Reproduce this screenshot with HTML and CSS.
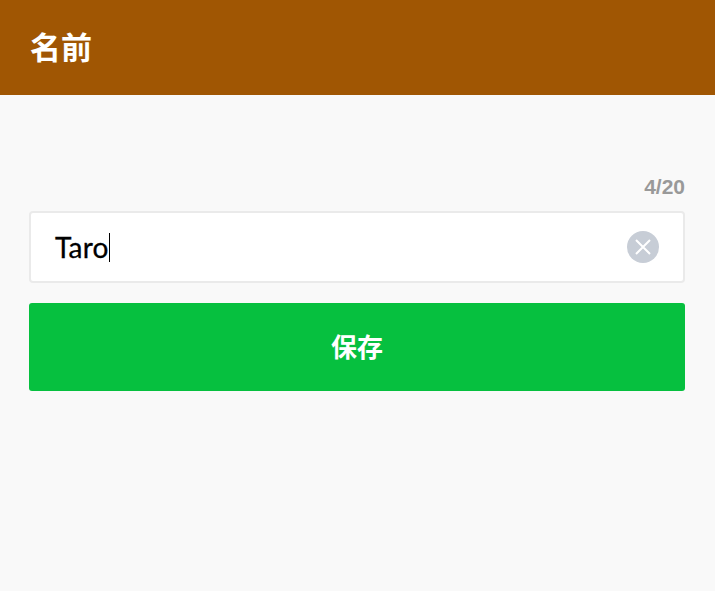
FILE: index.html
```html
<!DOCTYPE html>
<html lang="zh">
<head>
    <meta charset="UTF-8">
    <meta name="viewport" content="width=device-width, initial-scale=1.0">
    <title>名前</title>
    <link rel="stylesheet" href="styles.css">
</head>
<body>

    <header class="title-bar">
        <h1>名前</h1>
    </header>

    <main class="content">
        <div class="counter">4/20</div>

        <div class="name-field">
            <span class="name-value">Taro</span><span class="caret"></span>
            <span class="clear-btn">
                <svg width="16" height="16" viewBox="0 0 16 16">
                    <path d="M1 1 L15 15 M15 1 L1 15" stroke="#fff" stroke-width="2" fill="none"/>
                </svg>
            </span>
        </div>

        <button class="save-btn">保存</button>
    </main>

</body>
</html>
```

FILE: styles.css
```css
body {
    margin: 0;
    height: 591px;
    overflow: hidden;
    background-color: #f9f9f9;
    font-family: "Lato", "Noto Sans CJK JP", sans-serif;
}

.title-bar {
    height: 91px;
    padding-bottom: 4px;
    background-color: #a05603;
    display: flex;
    align-items: center;
    padding-left: 30px;
}
.title-bar h1 {
    margin: 0;
    color: #fff;
    font-size: 31px;
    font-weight: bold;
}

.content {
    padding: 77px 30px 0 29px;
}

.counter {
    height: 30px;
    line-height: 30px;
    text-align: right;
    color: #999;
    font-family: "Liberation Sans", sans-serif;
    font-size: 21px;
    font-weight: bold;
    margin-bottom: 9px;
}

.name-field {
    height: 68px;
    background: #fff;
    border: 2px solid #eaeaea;
    border-radius: 4px;
    display: flex;
    align-items: center;
    padding: 0 24px;
}
.name-value {
    color: #000;
    font-size: 28px;
    -webkit-text-stroke: 0.3px #000;
    letter-spacing: 0.2px;
}
.caret {
    width: 1px;
    height: 29px;
    background: #000;
}
.clear-btn {
    margin-left: auto;
    width: 32px;
    height: 32px;
    border-radius: 50%;
    background: #c7cdd6;
    display: flex;
    align-items: center;
    justify-content: center;
}

.save-btn {
    display: block;
    width: 100%;
    height: 88px;
    margin-top: 20px;
    padding: 0 0 4px;
    background: #06c03f;
    border: none;
    border-radius: 3px;
    color: #fff;
    font-family: inherit;
    font-size: 26px;
    font-weight: bold;
}
```
